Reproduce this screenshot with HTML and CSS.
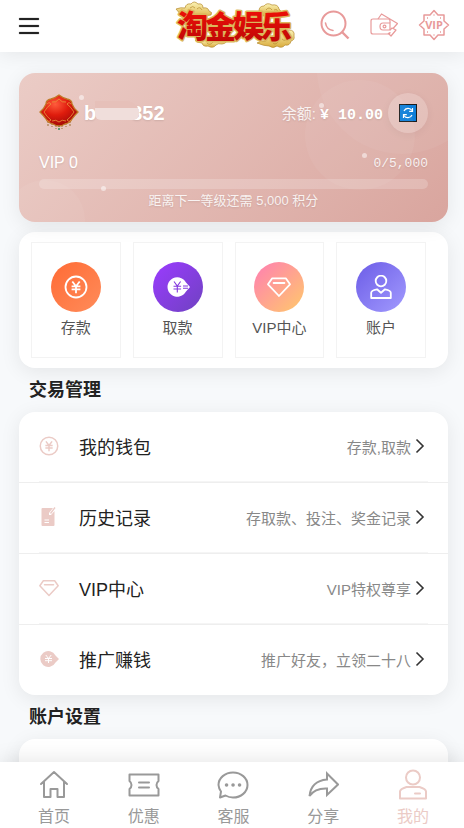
FILE: index.html
```html
<!DOCTYPE html>
<html lang="zh-CN">
<head>
    <meta charset="UTF-8">
    <meta name="viewport" content="width=device-width, initial-scale=1.0">
    <title>淘金娱乐</title>
    <link rel="stylesheet" href="styles.css">
</head>
<body>
    <svg class="sprite" aria-hidden="true">
        <symbol id="icon-yen" viewBox="0 0 24 24">
            <circle cx="12" cy="12" r="10.5" fill="none" stroke="currentColor" stroke-width="1.8"/>
            <path d="M8.3 6.5l3.7 4.8 3.7-4.8M12 11.3v6.9M7.6 11.4h8.8M7.6 14.4h8.8" fill="none" stroke="currentColor" stroke-width="1.8"/>
        </symbol>
        <symbol id="icon-gem" viewBox="0 0 24 24">
            <path d="M5.2 3.3h13.6l4.2 6L12 21 1 9.3z" fill="none" stroke="currentColor" stroke-width="1.8" stroke-linejoin="round"/>
            <path d="M6.6 8h10.8" stroke="currentColor" stroke-width="1.8" stroke-linecap="round"/>
        </symbol>
    </svg>

    <header class="header">
        <button type="button" class="menu-btn" aria-label="菜单">
            <span></span>
            <span></span>
            <span></span>
        </button>
        <a href="#" class="logo" aria-label="淘金娱乐">
            <svg viewBox="0 0 120 48" width="120" height="48">
                <defs>
                    <linearGradient id="gold" x1="0" y1="0" x2="0" y2="1">
                        <stop offset="0" stop-color="#fbf3b4"/>
                        <stop offset="1" stop-color="#d9ab3c"/>
                    </linearGradient>
                    <linearGradient id="red" x1="0" y1="0" x2="0" y2="1">
                        <stop offset="0" stop-color="#fa1208"/>
                        <stop offset="1" stop-color="#b80606"/>
                    </linearGradient>
                </defs>
                <g fill="url(#gold)" stroke="#b58a2e" stroke-width="0.7">
                    <path d="M1 8q5-2 9-1 1-5 6-4 3-4 7 0 5-1 5 4 5-1 6 3 4 1 2 4l-26 4q-5-5-9-10z"/>
                    <path d="M84 10q0-5 5-5 3-4 8-1 6-1 7 4 4 3 2 7H86z"/>
                    <path d="M20 39h30q3 3-3 4-4-1-6 1-3 4-8 1-5 1-6-3-5 0-7-3z"/>
                    <path d="M82 42q5-3 9-2 1-5 7-5l16-6q6 0 5 6 1 4-3 5-1 5-6 4-3 4-8 1-4 3-8 0-5 0-12-3z"/>
                    <path d="M15 7q3-3 5 0M22 8q3-3 5 1M91 9q3-4 6 0M99 9q3-2 4 2M32 42q3 3 6-1M97 41q3 4 6 0M107 38q3 3 6-1" fill="none"/>
                </g>
                <g class="logo-text" font-size="31">
                    <text x="2 30 58 86" y="36 37 36 37" fill="#a8731f" stroke="#dcb75c" stroke-width="3">淘金娱乐</text>
                    <text x="2 30 58 86" y="36 37 36 37" fill="url(#red)">淘金娱乐</text>
                </g>
            </svg>
        </a>
        <nav class="header-links">
            <a href="#" aria-label="搜索">
                <svg viewBox="0 0 30 30" width="30" height="30" fill="none" stroke="currentColor" stroke-width="2">
                    <circle cx="13.5" cy="13.5" r="12"/>
                    <path d="M22 22l6.5 6.5" stroke-width="2.4"/>
                    <path d="M5.5 13q1 6.500 7.5 7.5" stroke-width="1.6" stroke-linecap="round"/>
                </svg>
            </a>
            <a href="#" aria-label="钱包">
                <svg viewBox="0 0 28 24" width="28" height="24" fill="none" stroke="currentColor" stroke-width="1.2" stroke-linejoin="round">
                    <path d="M20 10V8q0-2-2-2H3Q1 6 1 8v11q0 2 2 2h15q2 0 2-2"/>
                    <path d="M8 6l3.500-5 16 9.500-4.500 5"/>
                    <path d="M20 17h-7q-3 0-3-3.500T13 10h7z"/>
                    <circle cx="14.500" cy="13.500" r="1.400"/>
                    <path d="M20 17l2-2 4 2-5 6-3-3"/>
                </svg>
            </a>
            <a href="#" aria-label="VIP">
                <svg viewBox="0 0 32 32" width="32" height="32" fill="none" stroke="currentColor" stroke-width="1.5" stroke-linejoin="round">
                    <path d="M16 1.500l4 4.500h6v6l4.500 4-4.500 4v6h-6l-4 4.500-4-4.500H6v-6l-4.500-4L6 12V6h6z"/>
                    <path d="M9 9h1M22 9h1M15.500 6h1M9 23h1M22 23h1M15.500 26h1" stroke-width="1.5"/>
                    <text class="vip-text" x="16" y="20" font-size="11" text-anchor="middle" fill="currentColor" stroke="none">VIP</text>
                </svg>
            </a>
        </nav>
    </header>

    <main class="content">
        <section class="member-card">
            <div class="bubble bubble-big"></div>
            <div class="bubble bubble-mid"></div>
            <div class="bubble bubble-small"></div>
            <i class="dot dot-1"></i>
            <i class="dot dot-2"></i>
            <i class="dot dot-3"></i>
            <i class="dot dot-4"></i>

            <div class="member-top">
                <svg class="avatar" viewBox="0 0 40 40" width="40" height="40">
                    <defs>
                        <radialGradient id="badge" cx="0.4" cy="0.3" r="0.7">
                            <stop offset="0" stop-color="#ff5b3c"/>
                            <stop offset="0.5" stop-color="#df1c0d"/>
                            <stop offset="1" stop-color="#a40a08"/>
                        </radialGradient>
                    </defs>
                    <path d="M9 28v5M13 30v4M17 32v4M23 32v4M27 30v4M31 28v5" stroke="#a97d4c" stroke-width="1.2" stroke-dasharray="2 1"/>
                    <path d="M20 32v6" stroke="#5f9a72" stroke-width="2" stroke-dasharray="2 1"/>
                    <path d="M20 2q4 3 8 4 5 1 5 5 2 5 6 8-4 4-6 7-2 4-7 5-3 2-6 2-3 0-6-2-5-1-7-5-2-3-6-7 4-3 6-8 0-4 5-5 4-1 8-4z" fill="url(#badge)" stroke="#c17a27" stroke-width="1.3"/>
                    <path d="M5 19q3-5 7-8-2-3-4 0M35 19q-3-5-7-8 2-3 4 0M5 19q3 5 7 8-2 3-4 0M35 19q-3 5-7 8 2 3 4 0M13 9q4 1 7-3 3 4 7 3M13 28q4-2 7 1 3-3 7-1" fill="none" stroke="#e9963e" stroke-width="0.8"/>
                </svg>
                <div class="username">b<span class="mask"></span>352</div>
                <div class="balance">余额: <b>¥ 10.00</b></div>
                <button type="button" class="refresh" aria-label="刷新余额">
                    <svg viewBox="0 0 18 18" width="18" height="18">
                        <rect x="0.5" y="0.5" width="17" height="17" fill="#0078d7" stroke="#111"/>
                        <path d="M5 7a4.5 4.5 0 0 1 8-.5M13 11a4.5 4.5 0 0 1-8 .5" fill="none" stroke="#fff" stroke-width="1.2"/>
                        <path d="M13.5 4v3.300h-3.300M4.500 14v-3.300h3.300" fill="none" stroke="#fff" stroke-width="1.2"/>
                    </svg>
                </button>
            </div>
            <div class="level">
                <span class="level-name">VIP 0</span>
                <span class="level-points">0/5,000</span>
            </div>
            <div class="progress"></div>
            <p class="level-tip">距离下一等级还需 5,000 积分</p>
        </section>

        <nav class="actions">
            <a href="#" class="action">
                <span class="action-icon deposit"><svg width="24" height="24"><use href="#icon-yen"/></svg></span>
                存款
            </a>
            <a href="#" class="action">
                <span class="action-icon withdraw">
                    <svg viewBox="0 0 24 24" width="24" height="24">
                        <path d="M20 7.500A9.800 9.800 0 1 0 20 16.500L24 12z" fill="#fff"/>
                        <path d="M8 6.500l3.300 4.500 3.300-4.500M11.300 11v6.500M7.500 11.300h7.600M7.500 14h7.600M17 11h5M17 13.300h5" fill="none" stroke="#8338dd" stroke-width="1.1"/>
                    </svg>
                </span>
                取款
            </a>
            <a href="#" class="action">
                <span class="action-icon vip"><svg width="24" height="24"><use href="#icon-gem"/></svg></span>
                VIP中心
            </a>
            <a href="#" class="action">
                <span class="action-icon account">
                    <svg viewBox="0 0 24 24" width="24" height="24" fill="none" stroke="#fff" stroke-width="1.8" stroke-linejoin="round">
                        <circle cx="12" cy="6" r="5.3"/>
                        <path d="M8 14.300q-5.800 1-5.800 3.500V23h19.600v-5.200q0-2.500-5.800-3.500l-4 3.500z"/>
                    </svg>
                </span>
                账户
            </a>
        </nav>

        <h2 class="section-title">交易管理</h2>
        <div class="list">
            <a href="#" class="row">
                <svg class="row-icon" width="20" height="20"><use href="#icon-yen"/></svg>
                <span class="row-name">我的钱包</span>
                <span class="row-note">存款,取款</span>
                <svg class="arrow" viewBox="0 0 10 16" width="10" height="16"><path d="M1.500 1.500L8 8l-6.500 6.500"/></svg>
            </a>
            <a href="#" class="row">
                <svg class="row-icon" viewBox="0 0 20 20" width="20" height="20">
                    <path d="M3.500 1H14l-4 5v2h2l3.500-4V18q0 1-1 1h-11q-1 0-1-1V2q0-1 1-1z" fill="currentColor"/>
                    <path d="M11.500 6.500l4.500-6" stroke="currentColor" stroke-width="1.4"/>
                    <path d="M5.500 13h4.500M5.500 15.500h4.500" stroke="#fff" stroke-width="1"/>
                </svg>
                <span class="row-name">历史记录</span>
                <span class="row-note">存取款、投注、奖金记录</span>
                <svg class="arrow" viewBox="0 0 10 16" width="10" height="16"><path d="M1.500 1.500L8 8l-6.500 6.500"/></svg>
            </a>
            <a href="#" class="row">
                <svg class="row-icon" width="20" height="20"><use href="#icon-gem"/></svg>
                <span class="row-name">VIP中心</span>
                <span class="row-note">VIP特权尊享</span>
                <svg class="arrow" viewBox="0 0 10 16" width="10" height="16"><path d="M1.500 1.500L8 8l-6.500 6.500"/></svg>
            </a>
            <a href="#" class="row">
                <svg class="row-icon" viewBox="0 0 20 20" width="20" height="20">
                    <path d="M16.500 6.500A8 8 0 1 0 16.500 13.500L20 10z" fill="currentColor"/>
                    <path d="M6.800 6l2.700 3.500L12.200 6M9.500 9.500V14M6 9.500h7M6 11.700h7" fill="none" stroke="#fff" stroke-width="1"/>
                </svg>
                <span class="row-name">推广赚钱</span>
                <span class="row-note">推广好友，立领二十八</span>
                <svg class="arrow" viewBox="0 0 10 16" width="10" height="16"><path d="M1.500 1.500L8 8l-6.500 6.500"/></svg>
            </a>
        </div>

        <h2 class="section-title">账户设置</h2>
        <div class="list list-empty"></div>
    </main>

    <nav class="tabbar">
        <a href="#" class="tab">
            <svg viewBox="0 0 32 32" width="32" height="32">
                <path d="M3 15L16 3l13 12M6 12.500V28h6.500v-8h7v8H26V12.500"/>
            </svg>
            首页
        </a>
        <a href="#" class="tab">
            <svg viewBox="0 0 32 32" width="32" height="32">
                <path d="M1.500 5.500h29v6.500q-2 1.500-2 4t2 4v6.500h-29V20q2-1.500 2-4t-2-4zM11 13.500h10M11 18.500h10"/>
            </svg>
            优惠
        </a>
        <a href="#" class="tab">
            <svg viewBox="0 0 32 32" width="32" height="32">
                <path d="M3 28.500l1-6A12.500 12.500 0 0 1 1.500 16C1.500 9 8 3.500 16 3.500S30.500 9 30.500 16 24 28.500 16 28.500q-4 0-7.500-2z"/>
                <path d="M9.500 16h.1M16 16h.1M22.500 16h.1" stroke-width="3.500"/>
            </svg>
            客服
        </a>
        <a href="#" class="tab">
            <svg viewBox="0 0 32 32" width="32" height="32">
                <path class="sharp" d="M20 4.500L31 15.500 20 26v-6.500Q8 19 2.500 27 4 12 20 10.500z"/>
            </svg>
            分享
        </a>
        <a href="#" class="tab active">
            <svg viewBox="0 0 32 32" width="32" height="32">
                <circle cx="16" cy="8.500" r="7"/>
                <path d="M9.500 18h13q6.500 2 6.500 4.500v7H3v-7Q3 20 9.500 18zM18 24.500h5"/>
            </svg>
            我的
        </a>
    </nav>
</body>
</html>
```

FILE: styles.css
```css
* {
    margin: 0;
    padding: 0;
    box-sizing: border-box;
}

body {
    display: flex;
    flex-direction: column;
    height: 100vh;
    background-color: #f7f9fb;
    font-family: "Liberation Sans", "Noto Sans CJK SC", sans-serif;
    color: #222;
}

a {
    color: inherit;
    text-decoration: none;
}

button {
    border: none;
    background: none;
    cursor: pointer;
}

svg {
    display: block;
    flex-shrink: 0;
}

.sprite {
    position: absolute;
    width: 0;
    height: 0;
}

/* header */
.header {
    display: grid;
    grid-template-columns: 1fr auto 1fr;
    align-items: center;
    flex-shrink: 0;
    height: 52px;
    padding: 0 14px 2px 19px;
    background-color: #fff;
    box-shadow: 0 2px 20px rgba(0, 0, 0, 0.08);
    z-index: 1;
}

.menu-btn {
    display: flex;
    flex-direction: column;
    gap: 4px;
    width: 20px;
    padding-top: 2px;
}

.menu-btn span {
    height: 2px;
    border-radius: 1px;
    background-color: #222;
    box-shadow: 0 0 1px #222;
}

.menu-btn span + span {
    margin-top: 1px;
}

.logo-text {
    font-family: "Noto Sans CJK SC", sans-serif;
    font-weight: 900;
    stroke-linejoin: round;
}

.header-links {
    display: flex;
    align-items: center;
    justify-content: flex-end;
    gap: 20px;
    color: #e89a9a;
}

.vip-text {
    font-family: "Open Sans", sans-serif;
    font-weight: bold;
}

/* content */
.content {
    flex: 1;
    min-height: 0;
    padding: 21px 16px 0 19px;
    overflow-y: auto;
    scrollbar-width: none;
}

.member-card {
    position: relative;
    height: 149px;
    padding: 20px;
    border-radius: 16px;
    background: linear-gradient(135deg, #ebccc6, #d9a59e);
    box-shadow: 0 4px 20px rgba(0, 0, 0, 0.08);
    color: #fff;
    text-shadow: 0 1px 2px rgba(0, 0, 0, 0.1);
    overflow: hidden;
}

.bubble,
.dot {
    position: absolute;
    border-radius: 50%;
}

.bubble {
    background-color: rgba(255, 255, 255, 0.05);
}

.bubble-big {
    top: -89px;
    right: -39px;
    width: 170px;
    height: 170px;
}

.bubble-mid {
    top: 7px;
    right: 33px;
    width: 110px;
    height: 110px;
}

.bubble-small {
    bottom: -38px;
    left: -14px;
    width: 80px;
    height: 80px;
}

.dot {
    width: 5px;
    height: 5px;
    background-color: rgba(255, 255, 255, 0.5);
}

.dot-1 {
    top: 15%;
    left: 14%;
}

.dot-2 {
    top: 76%;
    left: 19%;
}

.dot-3 {
    top: 20%;
    left: 70%;
}

.dot-4 {
    top: 54%;
    left: 80%;
}

.member-top {
    display: flex;
    align-items: center;
    height: 40px;
}

.username {
    display: flex;
    align-items: center;
    margin-left: 5px;
    font-size: 20px;
    font-weight: bold;
}

.mask {
    position: relative;
    width: 35px;
    height: 24px;
}

.mask::after {
    content: "";
    position: absolute;
    top: 0;
    left: -1px;
    width: 44px;
    height: 19px;
    border-radius: 0 12px 6px 6px;
    background: linear-gradient(#e6c0b9 0 7px, #f0dedb 7px);
}

.balance {
    margin-left: auto;
    font-size: 15px;
    color: rgba(255, 255, 255, 0.85);
}

.balance b {
    font-family: "Liberation Mono", monospace;
    font-size: 15px;
    color: #fff;
}

.refresh {
    display: flex;
    align-items: center;
    justify-content: center;
    width: 40px;
    height: 40px;
    margin-left: 5px;
    border-radius: 50%;
    background-color: rgba(255, 255, 255, 0.2);
    box-shadow: 0 2px 8px rgba(0, 0, 0, 0.05);
}

.level {
    display: flex;
    align-items: center;
    justify-content: space-between;
    height: 20px;
    margin-top: 20px;
}

.level-name {
    font-size: 16px;
}

.level-points {
    font-family: "Liberation Mono", monospace;
    font-size: 13px;
    color: rgba(255, 255, 255, 0.85);
}

.progress {
    height: 10px;
    margin-top: 6px;
    border-radius: 5px;
    background-color: rgba(255, 255, 255, 0.2);
}

.level-tip {
    margin-top: 2px;
    font-size: 13px;
    line-height: 20px;
    text-align: center;
    color: rgba(255, 255, 255, 0.85);
}

/* quick actions */
.actions {
    display: grid;
    grid-template-columns: repeat(4, 1fr);
    gap: 12px;
    margin-top: 10px;
    padding: 10px 22px 10px 12px;
    border-radius: 16px;
    background-color: #fff;
    box-shadow: 0 4px 20px rgba(0, 0, 0, 0.08);
}

.action {
    display: flex;
    flex-direction: column;
    align-items: center;
    gap: 4px;
    height: 116px;
    padding-top: 19px;
    border: 1px solid #f3f3f3;
    font-size: 15px;
    line-height: 24px;
    color: #555;
}

.action-icon {
    display: flex;
    align-items: center;
    justify-content: center;
    width: 50px;
    height: 50px;
    border-radius: 50%;
    color: #fff;
}

.deposit {
    background: linear-gradient(135deg, #ff6b35, #ff8c5a);
}

.withdraw {
    background: linear-gradient(135deg, #9b3bff, #6f42c1);
}

.vip {
    background: linear-gradient(135deg, #ff7eb3, #ffc96b);
}

.account {
    background: linear-gradient(135deg, #6c5ce7, #a29bfe);
}

/* lists */
.section-title {
    padding: 0 10px;
    font-size: 18px;
    line-height: 44px;
}

.list {
    border-radius: 16px;
    background-color: #fff;
    box-shadow: 0 4px 20px rgba(0, 0, 0, 0.08);
}

.list-empty {
    height: 80px;
}

.row {
    position: relative;
    display: flex;
    align-items: center;
    height: 71px;
    padding: 0 23px 2px 20px;
    border-bottom: 1px solid #eee;
}

.row::after {
    content: "";
    position: absolute;
    right: 20px;
    bottom: 0;
    left: 20px;
    height: 1px;
    background-color: #f5f5f5;
}

.row:last-child {
    height: 70px;
    border-bottom: none;
}

.row:last-child::after {
    display: none;
}

.row-icon {
    color: #ebcbc6;
}

.row-name {
    margin-left: 20px;
    font-size: 18px;
}

.row-note {
    margin-left: auto;
    font-size: 15px;
    color: #888;
}

.arrow {
    margin-left: 4px;
    fill: none;
    stroke: #333;
    stroke-width: 1.6;
}

/* bottom tabs */
.tabbar {
    display: flex;
    flex-shrink: 0;
    height: 66px;
    padding: 7px 6px 0 9px;
    background-color: #fff;
    box-shadow: 0 -2px 20px rgba(0, 0, 0, 0.1);
    z-index: 1;
}

.tab {
    display: flex;
    flex: 1;
    flex-direction: column;
    align-items: center;
    gap: 4px;
    font-size: 16px;
    line-height: 24px;
    color: #999;
}

.tab svg {
    fill: none;
    stroke: currentColor;
    stroke-width: 2;
    stroke-linecap: round;
    stroke-linejoin: round;
}

.tab .sharp {
    stroke-linejoin: miter;
}

.tab.active {
    color: #ebcbc6;
}
```
